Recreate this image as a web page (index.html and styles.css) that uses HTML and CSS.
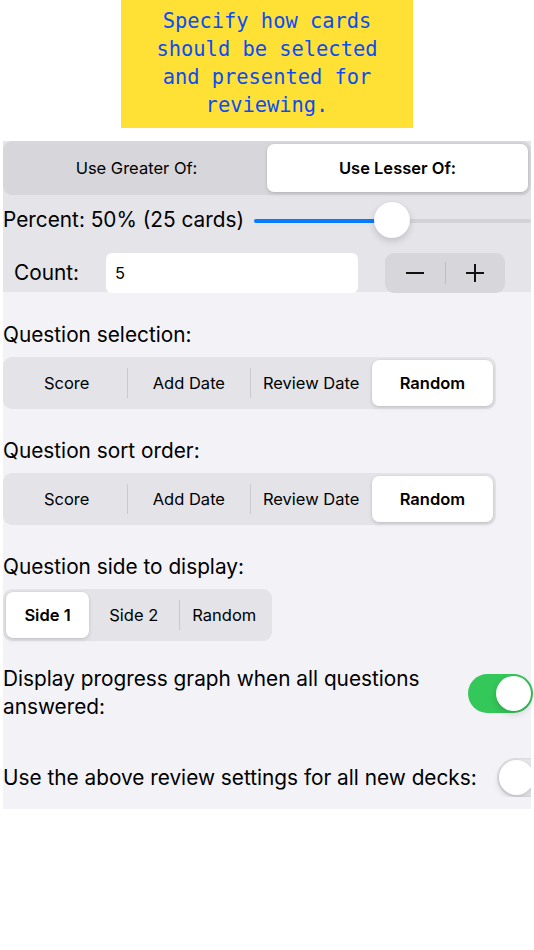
FILE: index.html
```html
<!DOCTYPE html>
<html>
<head>
	<meta charset="utf-8">
	<title>Review settings</title>
	<link rel="stylesheet" href="styles.css">
</head>
<body>
<div class="note">
	<p>Specify how cards should be selected and presented for reviewing.</p>
</div>

<div class="panel">
	<div class="top">
		<div class="seg seg-wide">
			<div class="item">Use Greater Of:</div>
			<div class="item on">Use Lesser Of:</div>
		</div>

		<div class="slider-row">
			<span class="label">Percent: 50% (25 cards)</span>
			<div class="slider">
				<div class="fill"></div>
				<div class="thumb"></div>
			</div>
		</div>

		<div class="count-row">
			<span class="label">Count:</span>
			<div class="field">5</div>
			<div class="stepper">
				<span class="minus"></span>
				<i class="bar"></i>
				<span class="plus"></span>
			</div>
		</div>
	</div>

	<div class="bottom">
		<p class="label heading">Question selection:</p>
		<div class="seg seg-four">
			<div class="item">Score</div>
			<i class="bar"></i>
			<div class="item">Add Date</div>
			<i class="bar"></i>
			<div class="item">Review Date</div>
			<div class="item on">Random</div>
		</div>

		<p class="label heading">Question sort order:</p>
		<div class="seg seg-four">
			<div class="item">Score</div>
			<i class="bar"></i>
			<div class="item">Add Date</div>
			<i class="bar"></i>
			<div class="item">Review Date</div>
			<div class="item on">Random</div>
		</div>

		<p class="label heading">Question side to display:</p>
		<div class="seg seg-three">
			<div class="item on">Side 1</div>
			<div class="item">Side 2</div>
			<i class="bar"></i>
			<div class="item">Random</div>
		</div>

		<div class="switch-row first">
			<p class="label wrap">Display progress graph when all questions answered:</p>
			<div class="switch on"><span class="knob"></span></div>
		</div>

		<div class="switch-row second">
			<p class="label">Use the above review settings for all new decks:</p>
			<div class="switch off"><span class="knob"></span></div>
		</div>
	</div>
</div>
</body>
</html>
```

FILE: styles.css
```css
body, p{
	margin: 0;
	padding: 0;
}
body{
	background: #fff;
	font-family: Inter, "Liberation Sans", Arial, sans-serif;
	color: #000;
}
.note{
	width: 292px;
	height: 128px;
	margin: 0 auto;
	background: #ffe135;
	display: flex;
	align-items: center;
	justify-content: center;
}
.note p{
	width: 250px;
	font-family: "DejaVu Sans Mono", monospace;
	font-size: 20.4px;
	line-height: 28px;
	color: #0a4cf7;
	text-align: center;
	margin-top: -2px;
}
.panel{
	width: 531px;
	margin: 13px 0 0 3px;
}
.top{
	width: 528px;
	background: #e4e4e9;
	height: 151px;
}
.label{
	font-size: 20.8px;
	line-height: 26px;
}

/* segmented controls */
.seg{
	display: flex;
	align-items: center;
	padding: 3px;
	border-radius: 9px;
	box-sizing: border-box;
	background: #e3e3e8;
}
.seg .item{
	flex: 1;
	align-self: stretch;
	display: flex;
	align-items: center;
	justify-content: center;
	font-size: 16.5px;
	border-radius: 7px;
}
.seg .on{
	background: #fff;
	font-weight: 600;
	box-shadow: 0 2px 4px rgba(0,0,0,0.12), 0 0 0 0.5px rgba(0,0,0,0.06);
}
.seg .bar{
	width: 1px;
	height: 30px;
	background: #c9c9ce;
}
.seg-wide{
	width: 528px;
	height: 54px;
	background: #d6d6db;
}
.seg-four{
	width: 493px;
	height: 52px;
}
.seg-three{
	width: 269px;
	height: 52px;
}
.seg-three .on{
	flex: none;
	width: 83px;
}

/* slider */
.slider-row{
	height: 51px;
	display: flex;
	align-items: center;
}
.slider-row .label{
	flex: none;
	width: 251px;
	margin-top: -2px;
}
.slider{
	position: relative;
	flex: 1;
	height: 4px;
	border-radius: 2px;
	background: #d2d2d7;
}
.slider .fill{
	width: 138px;
	height: 4px;
	border-radius: 2px;
	background: #0a7aff;
}
.slider .thumb{
	position: absolute;
	left: 120px;
	top: -17px;
	width: 36px;
	height: 36px;
	border-radius: 50%;
	background: #fff;
	box-shadow: 0 3px 7px rgba(0,0,0,0.15), 0 0 0 0.5px rgba(0,0,0,0.05);
}

/* count */
.count-row{
	margin-top: 7px;
	height: 40px;
	display: flex;
	align-items: center;
}
.count-row .label{
	width: 92px;
	padding-left: 11px;
}
.field{
	width: 243px;
	height: 40px;
	padding-left: 9px;
	border-radius: 6px;
	background: #fff;
	font-size: 16.5px;
	line-height: 40px;
}
.stepper{
	margin-left: 27px;
	width: 120px;
	height: 40px;
	border-radius: 9px;
	background: #d6d6db;
	display: flex;
	align-items: center;
}
.stepper .minus, .stepper .plus{
	flex: 1;
	height: 40px;
	position: relative;
}
.stepper .minus:before, .stepper .plus:before, .stepper .plus:after{
	content: "";
	position: absolute;
	left: 50%;
	top: 50%;
	width: 18px;
	height: 2px;
	margin: -1px 0 0 -9px;
	background: #111;
}
.stepper .plus:after{
	width: 2px;
	height: 18px;
	margin: -9px 0 0 -1px;
}
.stepper .bar{
	width: 1px;
	height: 22px;
	background: #bcbcc1;
}

/* lower part */
.bottom{
	width: 528px;
	background: #f2f2f7;
	padding: 30px 0 12px;
}
.heading{
	margin-bottom: 9px;
}
.seg + .heading{
	margin-top: 29px;
}
.switch-row{
	display: flex;
	align-items: center;
	justify-content: space-between;
}
.switch-row.first{
	margin-top: 24px;
}
.switch-row.first .label{
	width: 440px;
	line-height: 28px;
}
.switch-row.second{
	margin-top: 37px;
	overflow: hidden;
}
.switch{
	flex: none;
	position: relative;
	width: 65px;
	height: 39px;
	border-radius: 20px;
	box-sizing: border-box;
}
.switch.on{
	background: #34c759;
	margin-right: -2px;
}
.switch.off{
	background: #e9e9eb;
	margin-right: -31px;
	box-shadow: inset 0 0 0 1.5px #dedee2;
}
.switch .knob{
	position: absolute;
	top: 2px;
	width: 35px;
	height: 35px;
	border-radius: 50%;
	background: #fff;
	box-shadow: 0 3px 7px rgba(0,0,0,0.15), 0 0 0 0.5px rgba(0,0,0,0.05);
}
.switch.on .knob{
	right: 2px;
}
.switch.off .knob{
	left: 2px;
}
```
